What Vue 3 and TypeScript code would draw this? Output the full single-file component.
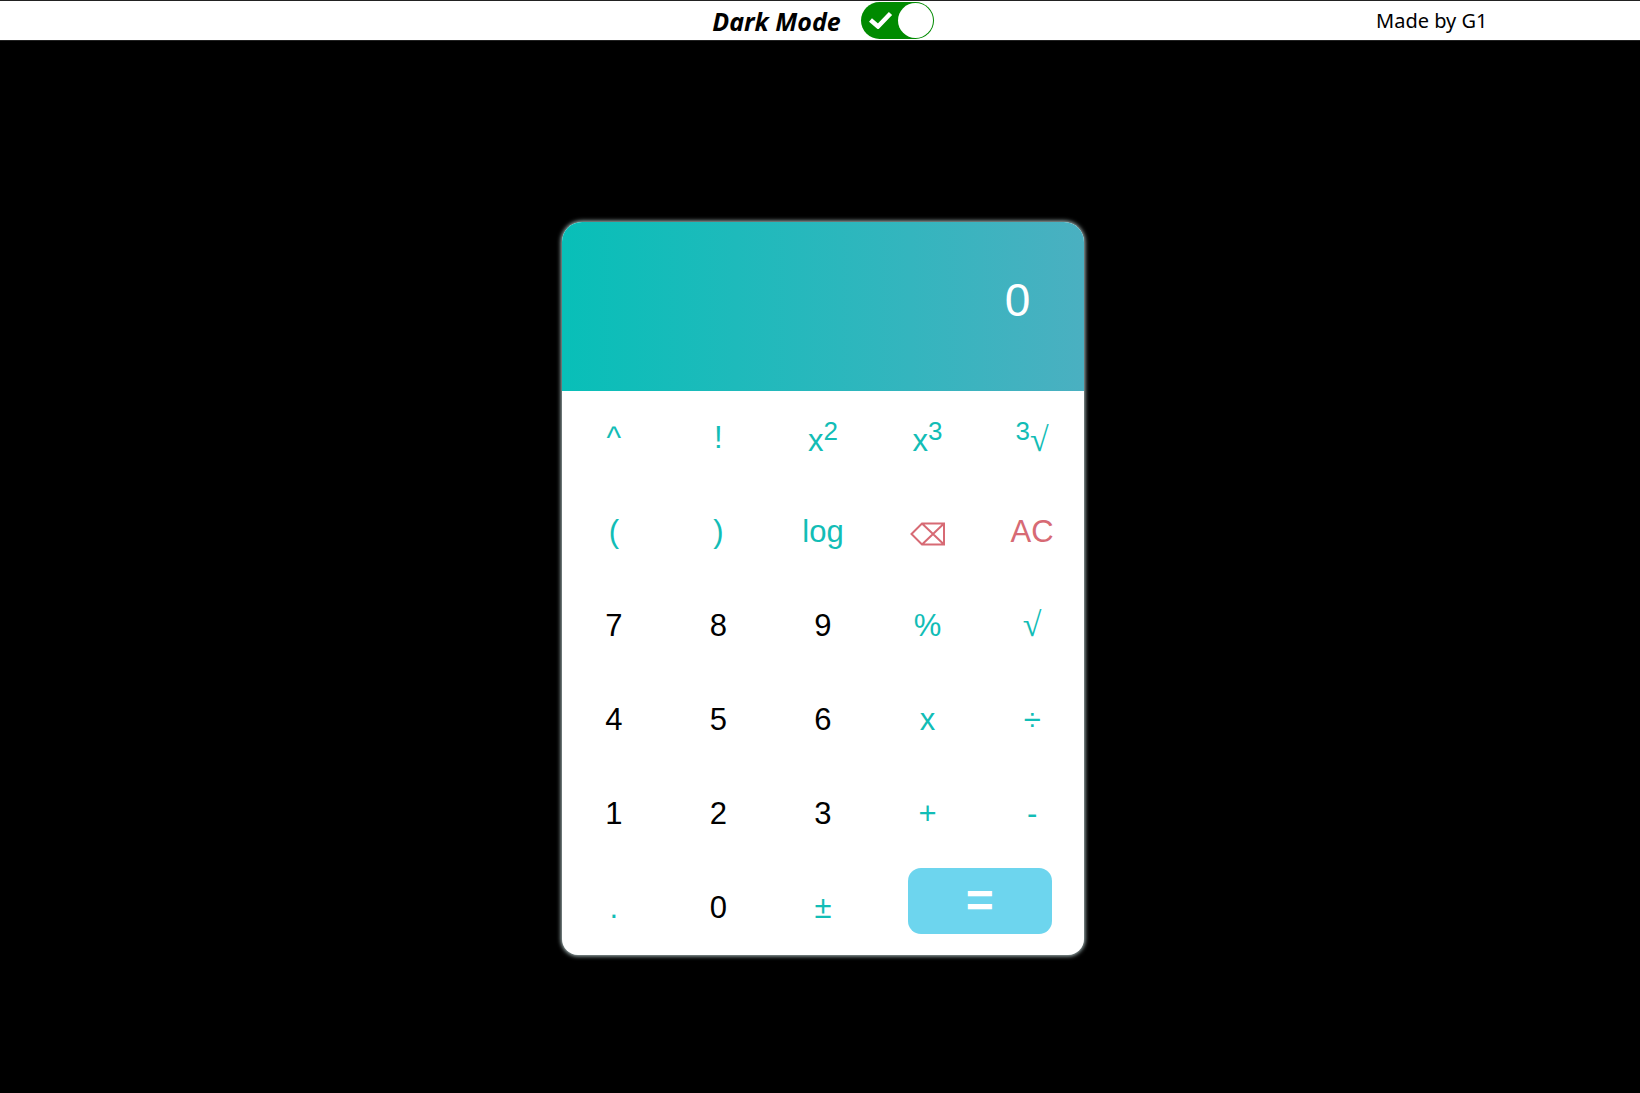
<script setup lang="ts">
import { ref } from 'vue'

interface Key {
  label: string
  name?: string
  kind?: 'digit' | 'danger'
  before?: string
  after?: string
}

const keys: Key[] = [
  { label: '^', name: 'power' },
  { label: '!', name: 'factorial' },
  { label: 'x', after: '2', name: 'square' },
  { label: 'x', after: '3', name: 'cube' },
  { label: '√', before: '3', name: 'cube root' },
  { label: '(' },
  { label: ')' },
  { label: 'log' },
  { label: 'delete', kind: 'danger', name: 'delete' },
  { label: 'AC', kind: 'danger' },
  { label: '7', kind: 'digit' },
  { label: '8', kind: 'digit' },
  { label: '9', kind: 'digit' },
  { label: '%' },
  { label: '√', name: 'square root' },
  { label: '4', kind: 'digit' },
  { label: '5', kind: 'digit' },
  { label: '6', kind: 'digit' },
  { label: 'x', name: 'multiply' },
  { label: '÷' },
  { label: '1', kind: 'digit' },
  { label: '2', kind: 'digit' },
  { label: '3', kind: 'digit' },
  { label: '+' },
  { label: '-' },
  { label: '.' },
  { label: '0', kind: 'digit' },
  { label: '±' },
]

const dark = ref(true)
const display = ref('0')

function press(key: Key) {
  if (key.label === 'AC') {
    display.value = '0'
  } else if (key.label === 'delete') {
    display.value = display.value.slice(0, -1) || '0'
  } else if (key.kind === 'digit' && display.value === '0') {
    display.value = key.label
  } else {
    display.value += (key.before ?? '') + key.label + (key.after ?? '')
  }
}
</script>

<template>
  <div class="page" :class="{ light: !dark }">
    <header class="bar">
      <label class="mode">
        <span class="mode-text">Dark Mode</span>
        <span class="switch">
          <input v-model="dark" type="checkbox" class="switch-input" />
          <svg class="tick" viewBox="0 0 24 18" aria-hidden="true">
            <path d="M1.5 9 L9 15.5 L21.5 2.5" fill="none" stroke="#fff" stroke-width="4.5" />
          </svg>
          <span class="knob"></span>
        </span>
      </label>
      <span class="credit">Made by G1</span>
    </header>

    <main class="content">
      <section class="calculator">
        <output class="screen">{{ display }}</output>
        <div class="keypad">
          <button
            v-for="(key, i) in keys"
            :key="i"
            type="button"
            class="key"
            :class="[key.kind, { raised: key.before || key.after }]"
            :aria-label="key.name"
            @click="press(key)"
          >
            <svg v-if="key.label === 'delete'" class="erase" viewBox="0 0 36 24" aria-hidden="true">
              <path
                d="M1.5 12 L12 1.5 H34 V22.5 H12 Z M12 1.5 L34 22.5 M12 22.5 L34 1.5"
                fill="none"
                stroke="currentColor"
                stroke-width="2"
              />
            </svg>
            <span v-else><sup v-if="key.before">{{ key.before }}</sup><span :class="{ root: key.label === '√' }">{{ key.label }}</span><sup v-if="key.after">{{ key.after }}</sup></span>
          </button>
          <button type="button" class="equals">=</button>
        </div>
      </section>
    </main>
  </div>
</template>

<style>
body {
  margin: 0;
  background: #000;
}
</style>

<style scoped>
.page {
  box-sizing: border-box;
  min-height: 100vh;
  background: #000;
  font-family: "Liberation Sans", Arial, sans-serif;
}

.page.light {
  background: #fff;
}

.bar {
  display: grid;
  grid-template-columns: 1fr 2fr 1fr;
  align-items: center;
  box-sizing: border-box;
  height: 41px;
  padding-left: 6px;
  border: 1px solid #222;
  border-width: 1px 0;
  background: #fff;
  color: #000;
}

.mode {
  grid-column: 2;
  display: flex;
  align-items: center;
  justify-content: center;
  gap: 20px;
}

.mode-text {
  font: italic 700 25px/32px "Noto Sans", sans-serif;
}

.switch {
  position: relative;
  display: flex;
}

.switch-input {
  appearance: none;
  width: 73px;
  height: 37px;
  margin: 0;
  border-radius: 19px;
  background: #999;
}

.switch-input:checked {
  background: #008a00;
}

.tick {
  position: absolute;
  top: 9px;
  left: 8px;
  width: 24px;
  height: 18px;
  pointer-events: none;
}

.knob {
  position: absolute;
  top: 1px;
  right: 1px;
  width: 35px;
  height: 35px;
  border-radius: 50%;
  background: #fff;
  pointer-events: none;
}

.switch-input:not(:checked) ~ .knob {
  right: 37px;
}

.credit {
  padding-right: 8px;
  font: 400 20px/32px "Comic Sans MS", "Noto Sans", sans-serif;
  text-align: center;
}

.content {
  padding: 181px 0 0 6px;
}

.calculator {
  width: 32%;
  min-width: 400px;
  margin: 0 auto;
  overflow: hidden;
  border-radius: 20px 20px 16px 16px;
  background: #fff;
  box-shadow: 0 0 4px 1px #b4c8c8;
}

.screen {
  display: flex;
  align-items: center;
  justify-content: flex-end;
  box-sizing: border-box;
  height: 169px;
  padding: 0 54px 14px;
  background: linear-gradient(90deg, #08bfb8, #4ab0c1);
  color: #fff;
  font-size: 46px;
  line-height: 56px;
}

.keypad {
  display: grid;
  grid-template-columns: repeat(5, 1fr);
  grid-auto-rows: 94px;
}

.key {
  display: flex;
  align-items: center;
  justify-content: center;
  padding: 0;
  border: 0;
  background: none;
  color: #12bdb6;
  font: 400 31px/36px "Liberation Sans", Arial, sans-serif;
}

.digit {
  color: #000;
}

.danger {
  color: #d76a74;
}

.raised {
  padding-top: 6px;
}

.root {
  font-family: "Liberation Serif", serif;
  font-size: 34px;
  line-height: 0;
}

.key sup {
  font-size: 26px;
  line-height: 0;
}

.erase {
  width: 36px;
  height: 24px;
  padding-top: 4px;
}

.equals {
  grid-column: span 2;
  place-self: start center;
  width: 144px;
  height: 66px;
  margin-top: 7px;
  padding: 0;
  border: 0;
  border-radius: 13px;
  background: #6dd5ee;
  color: #fff;
  font: 700 48px/56px "Liberation Sans", Arial, sans-serif;
}
</style>
